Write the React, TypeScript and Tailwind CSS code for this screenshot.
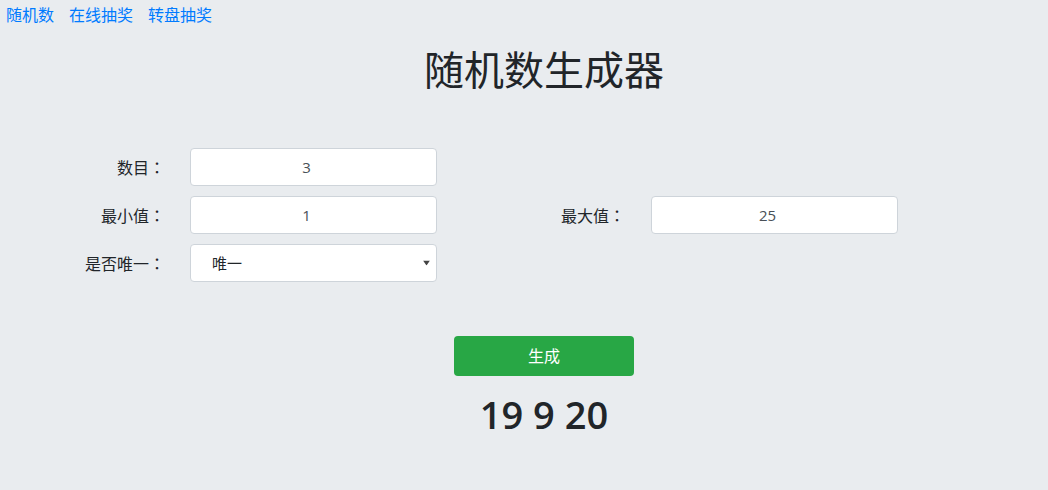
import { useState } from "react";

const links = ["随机数", "在线抽奖", "转盘抽奖"];

function Label({ text, className }: { text: string; className: string }) {
  return (
    <label className={`text-right ${className}`}>
      {text}
      <span className="font-['Noto_Sans_CJK_JP',sans-serif]">：</span>
    </label>
  );
}

export default function App() {
  const [count, setCount] = useState("3");
  const [min, setMin] = useState("1");
  const [max, setMax] = useState("25");
  const [unique, setUnique] = useState("唯一");
  const [result] = useState([19, 9, 20]);

  return (
    <div
      className="min-h-screen bg-[#e9ecef] text-[16px] text-[#212529]"
      style={{ fontFamily: '"Open Sans", "Noto Sans CJK SC", sans-serif' }}
    >
      {/* Top links */}
      <nav className="flex gap-[15px] pl-[6px] pt-[3px] leading-6">
        {links.map((l) => (
          <a key={l} href="#" className="text-[#007bff] hover:underline">
            {l}
          </a>
        ))}
      </nav>

      <div className="pl-10">
        <h1 className="mt-[19px] text-center text-[40px] font-normal leading-[48px]">随机数生成器</h1>
      </div>

      {/* Form */}
      <div className="mt-[54px] flex flex-col gap-[10px]">
        <div className="flex h-[38px] items-center">
          <Label text="数目" className="w-[165px]" />
          <input
            value={count}
            onChange={(e) => setCount(e.target.value)}
            className="ml-[25px] h-[38px] w-[247px] rounded border border-[#ced4da] bg-white pl-3 pr-[26px] text-center text-[15px] text-[#495057] outline-none"
          />
        </div>
        <div className="flex h-[38px] items-center">
          <Label text="最小值" className="w-[165px]" />
          <input
            value={min}
            onChange={(e) => setMin(e.target.value)}
            className="ml-[25px] h-[38px] w-[247px] rounded border border-[#ced4da] bg-white pl-3 pr-[26px] text-center text-[15px] text-[#495057] outline-none"
          />
          <Label text="最大值" className="w-[188px]" />
          <input
            value={max}
            onChange={(e) => setMax(e.target.value)}
            className="ml-[26px] h-[38px] w-[247px] rounded border border-[#ced4da] bg-white pl-3 pr-[26px] text-center text-[15px] text-[#495057] outline-none"
          />
        </div>
        <div className="flex h-[38px] items-center">
          <Label text="是否唯一" className="w-[165px]" />
          <div className="relative ml-[25px] h-[38px] w-[247px]">
            <select
              value={unique}
              onChange={(e) => setUnique(e.target.value)}
              className="h-full w-full appearance-none rounded border border-[#ced4da] bg-white pl-[21px] text-[15px] text-[#212529] outline-none"
            >
              <option>唯一</option>
              <option>不唯一</option>
            </select>
            <svg
              width="7"
              height="5"
              viewBox="0 0 7 5"
              className="pointer-events-none absolute right-[7px] top-1/2 -translate-y-1/2"
            >
              <path d="M0 0h7L3.5 5z" fill="#444" />
            </svg>
          </div>
        </div>
      </div>

      {/* Action + result */}
      <div className="mt-[54px] flex flex-col items-center pl-10">
        <button className="h-[40px] w-[180px] rounded bg-[#28a745] text-white hover:bg-[#218838]">生成</button>
        <div className="mt-[16px] text-[38px] font-semibold leading-[1.2]">{result.join(" ")}</div>
      </div>
    </div>
  );
}
